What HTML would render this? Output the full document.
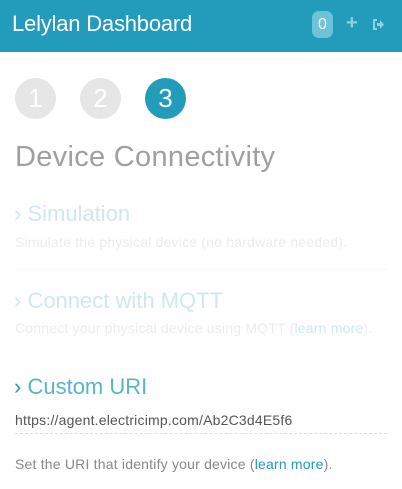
<!DOCTYPE html>
<html><head><style>
body{margin:0;width:402px;height:489px;background:#fff;font-family:"Liberation Sans",sans-serif;overflow:hidden;position:relative}
.hdr{position:absolute;left:0;top:0;width:402px;height:52px;background:#239bbb}
.t{position:absolute;left:12px;top:11px;color:#fff;font-size:22px;letter-spacing:-0.2px}
.badge{position:absolute;left:312px;top:11px;width:21px;height:27px;border-radius:7px;background:#6cc3da;color:#fff;font-size:16px;text-align:center;line-height:27px}
.c{position:absolute;top:78px;width:41px;height:41px;border-radius:50%;background:#e6e6e6;color:#fff;font-size:26px;text-align:center;line-height:41px}
.a{position:absolute;white-space:nowrap}
.d{font-size:14px;letter-spacing:0.2px}
</style></head><body>
<div class="hdr"><div class="t">Lelylan Dashboard</div><div class="badge">0</div>
<div class="a" style="left:346px;top:12px;color:#8fd0e2;font-size:20px;font-weight:bold">+</div>
<svg class="a" style="left:372px;top:19px" width="12" height="11" viewBox="0 0 12 11"><path d="M5 1H2v9h3" stroke="#8fd0e2" stroke-width="2" fill="none"/><path d="M5 4h3V1l4 4.5L8 10V7H5z" fill="#8fd0e2"/></svg></div>
<div class="c" style="left:15px">1</div><div class="c" style="left:80px">2</div><div class="c" style="left:145px;background:#239bbb">3</div>
<div class="a" style="left:15px;top:141px;font-size:29px;color:#a0a0a0;letter-spacing:0.3px">Device Connectivity</div>
<div class="a" style="left:14px;top:201px;font-size:22px;color:#cfe8f0">&rsaquo; Simulation</div>
<div class="a d" style="left:15px;top:234px;color:#ececec">Simulate the physical device (no hardware needed).</div>
<div class="a" style="left:15px;top:269px;width:372px;border-top:1px solid #f8f8f8"></div>
<div class="a" style="left:14px;top:288px;font-size:22px;color:#cfe8f0">&rsaquo; Connect with MQTT</div>
<div class="a d" style="left:15px;top:320px;color:#ececec">Connect your physical device using MQTT (<span style="color:#cfe8f0">learn more</span>).</div>
<div class="a" style="left:14px;top:374px;font-size:22px;color:#239bbb">&rsaquo; <span style="color:#5ab3cc">Custom URI</span></div>
<div class="a d" style="left:15px;top:412px;color:#555">https://agent.electricimp.com/Ab2C3d4E5f6</div>
<div class="a" style="left:15px;top:433px;width:372px;border-top:1px dashed #ddd"></div>
<div class="a d" style="left:15px;top:456px;color:#888">Set the URI that identify your device (<span style="color:#239bbb">learn more</span>).</div>
</body></html>
